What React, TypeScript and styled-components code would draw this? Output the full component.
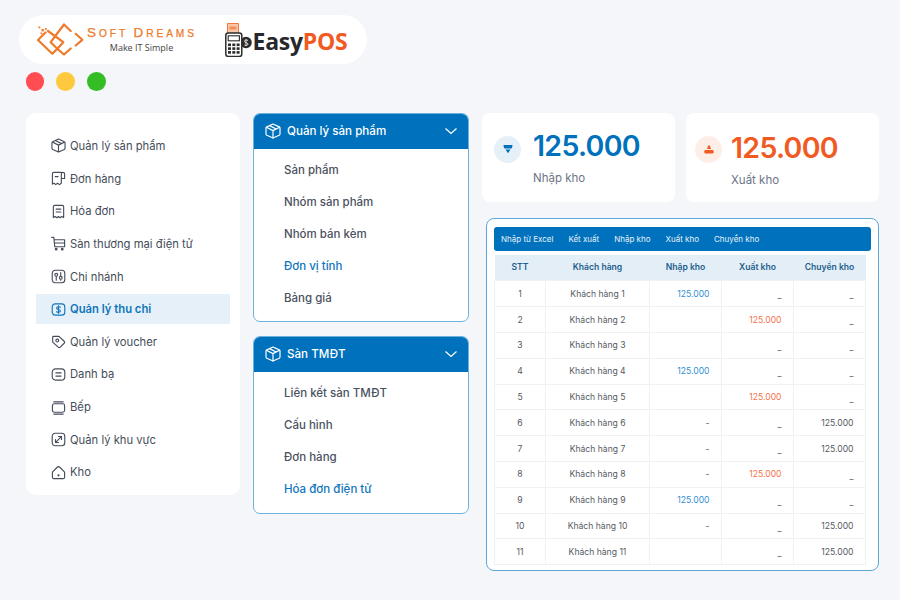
import React from "react";
import styled, { createGlobalStyle } from "styled-components";

const GlobalStyle = createGlobalStyle`
  html, body {
    margin: 0;
    padding: 0;
    background: #f4f6fa;
    font-family: "Inter", "Liberation Sans", sans-serif;
  }
  * { box-sizing: border-box; }
`;

const Page = styled.div`
  width: 900px;
  height: 600px;
  overflow: hidden;
  padding: 15px 21px 0 26px;
`;

const LogoPill = styled.div`
  width: 348px;
  height: 49px;
  margin-left: -7px;
  background: #fff;
  border-radius: 25px;
  display: flex;
  align-items: center;
  padding-left: 18px;
`;

const SoftText = styled.div`
  margin-left: 2px;
  width: 110px;
  display: flex;
  flex-direction: column;
  align-items: center;
`;

const SoftName = styled.div`
  font-family: "Liberation Sans", sans-serif;
  font-size: 10.2px;
  line-height: 14px;
  letter-spacing: 2.9px;
  color: #ee7a2b;
  -webkit-text-stroke: 0.25px #ee7a2b;
  white-space: nowrap;
  b {
    font-size: 13.5px;
    font-weight: 400;
  }
`;

const SoftTag = styled.div`
  font-family: "Open Sans", sans-serif;
  font-size: 9px;
  line-height: 13px;
  margin-right: 1px;
  color: #444;
`;

const PosMark = styled.svg`
  margin-left: 28px;
  flex: none;
`;

const PosName = styled.div`
  font-family: "Open Sans", sans-serif;
  font-weight: 700;
  font-size: 23px;
  letter-spacing: -0.25px;
  margin: 3px 0 0 0.5px;
  color: #26282b;
  span {
    color: #f15a22;
  }
`;

const Dots = styled.div`
  display: flex;
  gap: 12px;
  margin: 8.4px 0 0 -0.3px;
`;

const Dot = styled.div<{ $color: string }>`
  width: 18.7px;
  height: 18.7px;
  border-radius: 50%;
  background: ${(p) => p.$color};
`;

const Columns = styled.div`
  display: flex;
  align-items: flex-start;
  margin-top: 21.9px;
`;

const Sidebar = styled.nav`
  width: 214px;
  height: 382px;
  background: #fff;
  border-radius: 10px;
  padding: 18px 10px 0;
  display: flex;
  flex-direction: column;
`;

const SideItem = styled.div<{ $active?: boolean }>`
  height: 30px;
  margin-bottom: 2.65px;
  flex: none;
  display: flex;
  align-items: center;
  gap: 4px;
  padding-left: 15px;
  font-size: 11.25px;
  white-space: nowrap;
  font-weight: ${(p) => (p.$active ? 600 : 400)};
  color: ${(p) => (p.$active ? "#0f75bc" : "#454c59")};
  background: ${(p) => (p.$active ? "#e5f0f8" : "transparent")};
`;

const Middle = styled.div`
  width: 216px;
  margin-left: 13px;
  display: flex;
  flex-direction: column;
  gap: 14px;
`;

const Menu = styled.section<{ $height: number }>`
  height: ${(p) => p.$height}px;
  background: #fff;
  border: 1px solid #6fb1dd;
  border-radius: 7px;
  overflow: hidden;
`;

const MenuHeader = styled.header`
  height: 36px;
  margin: -1px -1px 0;
  background: #0071bc;
  color: #fff;
  display: flex;
  align-items: center;
  padding: 1px 11px 0 12px;
  gap: 6px;
  font-size: 11.6px;
  font-weight: 500;
`;

const MenuTitle = styled.span`
  flex: 1;
`;

const MenuList = styled.div`
  padding: 5px 0 0 30px;
`;

const MenuItem = styled.div<{ $active?: boolean }>`
  height: 32px;
  display: flex;
  align-items: center;
  font-size: 11.5px;
  font-weight: 500;
  color: ${(p) => (p.$active ? "#0f75bc" : "#4a5160")};
`;

const Right = styled.div`
  width: 397px;
  margin-left: 13px;
`;

const Stats = styled.div`
  display: flex;
  gap: 11px;
`;

const StatCard = styled.div<{ $top: number; $side: number }>`
  width: 193px;
  height: 89px;
  background: #fff;
  border-radius: 8px;
  display: flex;
  padding: ${(p) => p.$top}px 0 0 ${(p) => p.$side}px;
  gap: ${(p) => p.$side}px;
`;

const StatIcon = styled.div<{ $bg: string; $offset: number }>`
  width: 27px;
  height: 27px;
  margin-top: ${(p) => p.$offset}px;
  border-radius: 50%;
  flex: none;
  background: ${(p) => p.$bg};
  display: flex;
  align-items: center;
  justify-content: center;
`;

const StatBody = styled.div`
  display: flex;
  flex-direction: column;
`;

const StatValue = styled.div<{ $color: string }>`
  font-size: 28.5px;
  letter-spacing: -0.7px;
  line-height: 36px;
  font-weight: 600;
  color: ${(p) => p.$color};
`;

const StatLabel = styled.div`
  margin-top: 7px;
  font-size: 11.5px;
  line-height: 14px;
  color: #6c7488;
`;

const TableCard = styled.section`
  width: 393px;
  height: 353px;
  margin: 16px 0 0 4px;
  background: #fff;
  border: 1px solid #5aa9d8;
  border-radius: 8px;
  padding: 8px 7px 0 7px;
`;

const Toolbar = styled.div`
  height: 24px;
  padding: 1px 0 0 7px;
  background: #0071bc;
  border-radius: 3px;
  display: flex;
  align-items: center;
  gap: 15px;
  color: #e8f2fa;
  font-size: 8px;
`;

const Grid = styled.table`
  width: 371px;
  margin-top: 4px;
  border-collapse: collapse;
  table-layout: fixed;
  font-size: 8.6px;
`;

const Head = styled.th`
  height: 26px;
  padding: 0 0 2px;
  background: #e3eef7;
  color: #235f8e;
  font-weight: 600;
  text-align: center;
`;

const Cell = styled.td<{ $align?: string; $color?: string; $low?: boolean }>`
  height: 25.8px;
  padding: ${(p) => (p.$low ? "3px 11.5px 0" : "0 11.5px")};
  border: 1px solid #f0f1f3;
  text-align: ${(p) => p.$align || "center"};
  color: ${(p) => p.$color || "#55595f"};
`;

const LogoMark = () => (
  <svg width="48" height="34" viewBox="0 0 48 34" fill="none" stroke="#ee7a2b" strokeWidth="2.2" strokeLinejoin="round" strokeLinecap="round">
    <path d="M8.5 9.5 L1 17 L15.3 30.8 L20.3 25.8" />
    <path d="M11 8 L26.3 19.2 L20.3 25.8 L13.7 19.2 L27 1.5 L33.7 8" />
    <path d="M20.3 25.8 L27 31.5 L33.7 25.5" />
    <path d="M38.7 10.8 L45.3 16.8 L38.7 22.5" />
    <rect x="1.5" y="3.5" width="1.8" height="1.8" fill="#ee7a2b" stroke="none" />
    <rect x="4.5" y="6" width="2.4" height="2.4" fill="#ee7a2b" stroke="none" />
    <rect x="8" y="5" width="1.8" height="1.8" fill="#ee7a2b" stroke="none" />
    <rect x="3.5" y="9.5" width="1.8" height="1.8" fill="#ee7a2b" stroke="none" />
  </svg>
);

const PosIcon = () => (
  <PosMark width="27" height="34" viewBox="0 0 27 34">
    <path d="M2.5 0.5 h11 v10 h-11 z" fill="#f9c7a8" stroke="#f15a22" strokeWidth="0.8" />
    <rect x="4.5" y="3.5" width="7" height="3" fill="#f58c5a" />
    <circle cx="21" cy="19.5" r="5.8" fill="#2c2c2c" />
    <path d="M23 17.5 c-1.3 -0.9 -3.6 -0.5 -3.6 0.9 c0 1.8 3.6 0.9 3.6 2.7 c0 1.4 -2.4 1.8 -3.6 0.9 M21 16 v7" stroke="#fff" strokeWidth="0.8" fill="none" />
    <rect x="0.8" y="10" width="16" height="23.5" rx="2.5" fill="#fff" stroke="#2c2c2c" strokeWidth="1.5" />
    <rect x="3.2" y="12.8" width="11.2" height="5" fill="#fff" stroke="#2c2c2c" strokeWidth="1.1" />
    <rect x="3" y="20.5" width="3" height="2.6" fill="#2c2c2c" />
    <rect x="7.3" y="20.5" width="3" height="2.6" fill="#2c2c2c" />
    <rect x="11.6" y="20.5" width="3" height="2.6" fill="#2c2c2c" />
    <rect x="3" y="24.3" width="3" height="2.6" fill="#2c2c2c" />
    <rect x="7.3" y="24.3" width="3" height="2.6" fill="#2c2c2c" />
    <rect x="11.6" y="24.3" width="3" height="2.6" fill="#2c2c2c" />
    <rect x="3" y="28.1" width="3" height="2.6" fill="#2c2c2c" />
    <rect x="7.3" y="28.1" width="3" height="2.6" fill="#2c2c2c" />
    <rect x="11.6" y="28.1" width="3" height="2.6" fill="#2c2c2c" />
  </PosMark>
);

const BoxIcon = ({ color = "#454c59", size = 15 }: { color?: string; size?: number }) => (
  <svg width={size} height={size} viewBox="0 0 16 16" fill="none" stroke={color} strokeWidth="1.2" strokeLinejoin="round" strokeLinecap="round" style={{ flex: "none" }}>
    <path d="M8 1 L14.2 3.9 Q15 4.3 15 5 V11 Q15 11.8 14.2 12.2 L8 15 L1.8 12.2 Q1 11.8 1 11 V5 Q1 4.3 1.8 3.9 Z" />
    <path d="M1.4 4.3 L8 7.6 L14.6 4.3 M8 7.6 V15 M4.6 2.6 L11.2 6" />
  </svg>
);

const sideIcons: Record<string, React.ReactNode> = {
  box: <path d="M8 1 L14.2 3.9 Q15 4.3 15 5 V11 Q15 11.8 14.2 12.2 L8 15 L1.8 12.2 Q1 11.8 1 11 V5 Q1 4.3 1.8 3.9 Z M1.4 4.3 L8 7.6 L14.6 4.3 M8 7.6 V15 M4.6 2.6 L11.2 6" />,
  order: <path d="M11 1.5 H3 Q1.5 1.5 1.5 3 V14 L3.3 13 L5 14.5 L7 13 L9 14.5 L11 13 V3 Q11 1.5 12.5 1.5 Q14.5 1.5 14.5 3 V8 H11 M4.5 6 H7.5" />,
  invoice: <path d="M4 1.5 H12 Q13.5 1.5 13.5 3 V14.5 L11.5 13.3 L9.7 14.7 L8 13.3 L6.3 14.7 L4.5 13.3 L2.5 14.5 V3 Q2.5 1.5 4 1.5 Z M5.5 5.5 H10.5 M5.5 8.5 H10.5" />,
  cart: (
    <>
      <path d="M0.8 1.5 H3 L4 11.5 H14 M3.4 4 H14.5 V11.5 M3.7 7.5 H14.5" />
      <circle cx="5.5" cy="14" r="0.9" fill="#454c59" />
      <circle cx="12" cy="14" r="0.9" fill="#454c59" />
    </>
  ),
  branch: (
    <>
      <rect x="1.3" y="1.3" width="13.4" height="13.4" rx="3.2" />
      <circle cx="5.6" cy="6.2" r="1.5" />
      <circle cx="10.4" cy="9.4" r="1.5" />
      <path d="M5.6 8 V12 M10.4 3.8 V7.6 M10.4 11.2 V12" />
    </>
  ),
  money: (
    <>
      <rect x="1.3" y="2" width="13.4" height="12" rx="3.2" />
      <path d="M10 5.6 C9.2 4.8 6 4.7 6 6.6 C6 8.6 10 7.4 10 9.5 C10 11.2 6.8 11.2 6 10.4 M8 4 V12" />
    </>
  ),
  tag: (
    <>
      <path d="M2.6 2.5 H8.5 L14.3 8 Q15 8.8 14.3 9.6 L9.6 14.2 Q8.8 14.9 8 14.2 L1.8 8.6 V3.3 Q1.8 2.5 2.6 2.5 Z" />
      <circle cx="6.7" cy="7" r="1.5" />
    </>
  ),
  contact: (
    <>
      <rect x="1.3" y="2" width="13.4" height="12" rx="3.6" />
      <path d="M5.2 6.3 H10.8 M5.2 9.7 H10.8" />
    </>
  ),
  kitchen: (
    <>
      <rect x="1.5" y="4" width="13" height="9" rx="2" />
      <path d="M3 2 H13 M3 15 H13" />
    </>
  ),
  area: (
    <>
      <rect x="1.3" y="1.3" width="13.4" height="13.4" rx="3.2" />
      <path d="M5 11 L11 5 M8 4.8 H11.2 V8 M4.8 8 V11.2 H8" />
    </>
  ),
  home: (
    <>
      <path d="M1.5 7.5 L6.6 2.4 Q8 1.2 9.4 2.4 L14.5 7.5 V13 Q14.5 14.5 13 14.5 H3 Q1.5 14.5 1.5 13 Z" />
      <circle cx="8" cy="11" r="0.6" fill="#454c59" />
    </>
  ),
};

const sideItems = [
  { icon: "box", label: "Quản lý sản phẩm" },
  { icon: "order", label: "Đơn hàng" },
  { icon: "invoice", label: "Hóa đơn" },
  { icon: "cart", label: "Sàn thương mại điện tử" },
  { icon: "branch", label: "Chi nhánh" },
  { icon: "money", label: "Quản lý thu chi", active: true },
  { icon: "tag", label: "Quản lý voucher" },
  { icon: "contact", label: "Danh bạ" },
  { icon: "kitchen", label: "Bếp" },
  { icon: "area", label: "Quản lý khu vực" },
  { icon: "home", label: "Kho" },
];

const menus = [
  {
    title: "Quản lý sản phẩm",
    height: 209,
    items: ["Sản phẩm", "Nhóm sản phẩm", "Nhóm bán kèm", "Đơn vị tính", "Bảng giá"],
    active: "Đơn vị tính",
  },
  {
    title: "Sàn TMĐT",
    height: 178,
    items: ["Liên kết sàn TMĐT", "Cấu hình", "Đơn hàng", "Hóa đơn điện tử"],
    active: "Hóa đơn điện tử",
  },
];

const V = "125.000";
const rows = [
  [V, "_", "_"],
  ["", V, "_"],
  ["", "_", "_"],
  [V, "_", "_"],
  ["", V, "_"],
  ["-", "_", V],
  ["-", "_", V],
  ["-", V, "_"],
  [V, "_", "_"],
  ["-", "_", V],
  ["", "_", V],
];

const columns = [51, 104, 72, 72, 72];
const toolbarItems = ["Nhập từ Excel", "Kết xuất", "Nhập kho", "Xuất kho", "Chuyển kho"];

const valueCell = (value: string, color: string) => (
  <Cell $align="right" $low={value === "_"} $color={value === V ? color : undefined}>
    {value}
  </Cell>
);

const App = () => {
  return (
    <>
      <GlobalStyle />
      <Page>
        <LogoPill>
          <LogoMark />
          <SoftText>
            <SoftName>
              <b>S</b>OFT <b>D</b>REAMS
            </SoftName>
            <SoftTag>Make IT Simple</SoftTag>
          </SoftText>
          <PosIcon />
          <PosName>
            Easy<span>POS</span>
          </PosName>
        </LogoPill>
        <Dots>
          <Dot $color="#ff4d52" />
          <Dot $color="#ffc93f" />
          <Dot $color="#35bd25" />
        </Dots>
        <Columns>
          <Sidebar>
            {sideItems.map((item) => (
              <SideItem key={item.label} $active={item.active}>
                <svg
                  width="15"
                  height="15"
                  viewBox="0 0 16 16"
                  fill="none"
                  stroke={item.active ? "#0f75bc" : "#454c59"}
                  strokeWidth="1.2"
                  strokeLinecap="round"
                  strokeLinejoin="round"
                >
                  {sideIcons[item.icon]}
                </svg>
                {item.label}
              </SideItem>
            ))}
          </Sidebar>
          <Middle>
            {menus.map((menu) => (
              <Menu key={menu.title} $height={menu.height}>
                <MenuHeader>
                  <BoxIcon color="#fff" size={16} />
                  <MenuTitle>{menu.title}</MenuTitle>
                  <svg width="14" height="14" viewBox="0 0 14 14" fill="none" stroke="#fff" strokeWidth="1.2">
                    <path d="M1.5 4.5 L7 9.5 L12.5 4.5" />
                  </svg>
                </MenuHeader>
                <MenuList>
                  {menu.items.map((item) => (
                    <MenuItem key={item} $active={item === menu.active}>
                      {item}
                    </MenuItem>
                  ))}
                </MenuList>
              </Menu>
            ))}
          </Middle>
          <Right>
            <Stats>
              <StatCard $top={15} $side={12}>
                <StatIcon $bg="#e5f0f8" $offset={8}>
                  <svg width="10" height="8" viewBox="0 0 10 8" fill="#0071bc">
                    <path d="M0.6 0 H9.4 Q9.6 3.4 8 3.4 H2 Q0.4 3.4 0.6 0 Z M2.6 4.4 H7.4 L5.6 7.4 Q5 8 4.4 7.4 Z" />
                  </svg>
                </StatIcon>
                <StatBody>
                  <StatValue $color="#0071bc">125.000</StatValue>
                  <StatLabel>Nhập kho</StatLabel>
                </StatBody>
              </StatCard>
              <StatCard $top={17} $side={9}>
                <StatIcon $bg="#fdeee8" $offset={6}>
                  <svg width="10" height="9" viewBox="0 0 10 9" fill="#f15a22">
                    <path d="M3 4 L4 1 Q5 -0.4 6 1 L7 4 Z M1.4 5 H8.6 Q9.8 5 9.8 6.8 Q9.8 8.6 8.6 8.6 H1.4 Q0.2 8.6 0.2 6.8 Q0.2 5 1.4 5 Z" />
                  </svg>
                </StatIcon>
                <StatBody>
                  <StatValue $color="#f15a22">125.000</StatValue>
                  <StatLabel>Xuất kho</StatLabel>
                </StatBody>
              </StatCard>
            </Stats>
            <TableCard>
              <Toolbar>
                {toolbarItems.map((item) => (
                  <span key={item}>{item}</span>
                ))}
              </Toolbar>
              <Grid>
                <colgroup>
                  {columns.map((width, i) => (
                    <col key={i} style={{ width }} />
                  ))}
                </colgroup>
                <thead>
                  <tr>
                    <Head>STT</Head>
                    <Head>Khách hàng</Head>
                    <Head>Nhập kho</Head>
                    <Head>Xuất kho</Head>
                    <Head>Chuyển kho</Head>
                  </tr>
                </thead>
                <tbody>
                  {rows.map((row, i) => (
                    <tr key={i}>
                      <Cell>{i + 1}</Cell>
                      <Cell>Khách hàng {i + 1}</Cell>
                      {valueCell(row[0], "#2f8fd6")}
                      {valueCell(row[1], "#f4714a")}
                      {valueCell(row[2], "#55595f")}
                    </tr>
                  ))}
                </tbody>
              </Grid>
            </TableCard>
          </Right>
        </Columns>
      </Page>
    </>
  );
};

export default App;
